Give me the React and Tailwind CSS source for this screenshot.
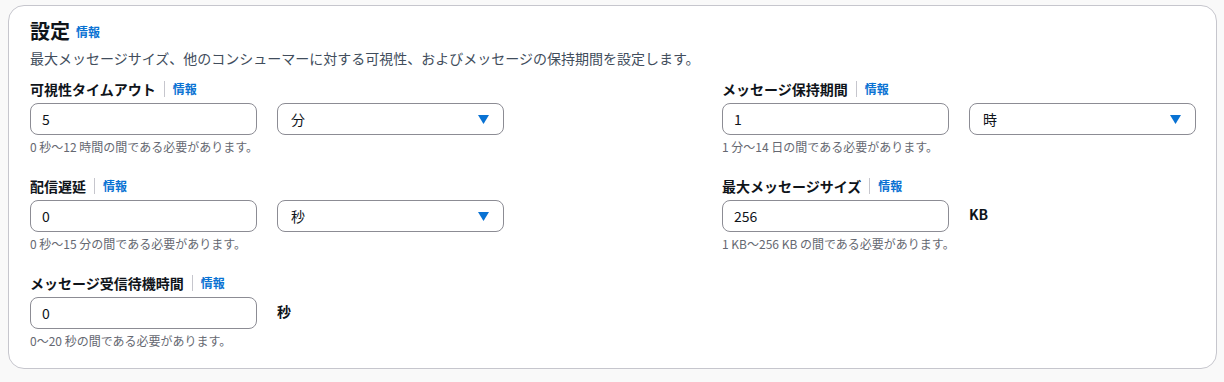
import React from "react";

const font = { fontFamily: '"Noto Sans CJK JP", "Noto Sans", sans-serif' };

function Info() {
  return <span className="text-[12px] leading-[16px] font-bold text-[#0972d3]">情報</span>;
}

function Label({ children }) {
  return (
    <div className="flex items-center h-[20px]">
      <span className="text-[14px] leading-[20px] font-bold text-[#0f141a]">{children}</span>
      <span className="mx-[8px] w-px h-[16px] bg-[#c6c6cd]" />
      <Info />
    </div>
  );
}

function TextInput({ value }) {
  return (
    <div className="h-[32px] rounded-[8px] border border-[#8c8c94] bg-white flex items-center pl-[11px] text-[14px] text-[#0f141a]">
      {value}
    </div>
  );
}

function Select({ value }) {
  return (
    <div className="h-[32px] rounded-[8px] border border-[#8c8c94] bg-white flex items-center justify-between pl-[13px] pr-[14px] text-[14px] text-[#0f141a]">
      <span>{value}</span>
      <svg width="11" height="9" viewBox="0 0 11 9">
        <path d="M0 0 H11 L5.5 9 Z" fill="#0972d3" />
      </svg>
    </div>
  );
}

function Unit({ children }) {
  return (
    <div className="pt-[4px] text-[14px] leading-[20px] font-bold text-[#0f141a]">{children}</div>
  );
}

function Hint({ children }) {
  return <div className="mt-[4px] text-[12px] leading-[16px] text-[#656871]">{children}</div>;
}

function Field({ label, value, select, unit, hint }) {
  return (
    <div className="flex flex-col">
      <Label>{label}</Label>
      <div className="grid grid-cols-2 gap-5 mt-[4px]">
        <TextInput value={value} />
        {select ? <Select value={select} /> : <Unit>{unit}</Unit>}
      </div>
      <Hint>{hint}</Hint>
    </div>
  );
}

export default function App() {
  return (
    <div className="w-[1224px] h-[382px] bg-[#f9f9f9] pt-[5px] px-[8px]" style={font}>
      <div className="w-[1209px] h-[364px] rounded-[16px] border border-[#c6c6cd] bg-white pt-[11px] pl-[21px] pr-[20px]">
        <div className="flex items-center gap-[6px] h-[28px]">
          <span className="text-[20px] leading-[28px] font-bold text-[#0f141a]">設定</span>
          <span className="text-[12px] leading-[16px] font-bold text-[#0972d3] mt-[2px]">情報</span>
        </div>
        <div className="text-[14px] leading-[20px] text-[#414d5c] mt-[3px]">
          最大メッセージサイズ、他のコンシューマーに対する可視性、およびメッセージの保持期間を設定します。
        </div>
        <div className="grid grid-cols-2 gap-x-[218px] mt-[11px]">
          <div className="flex flex-col gap-[21px]">
            <Field label="可視性タイムアウト" value="5" select="分" hint="0 秒〜12 時間の間である必要があります。" />
            <Field label="配信遅延" value="0" select="秒" hint="0 秒〜15 分の間である必要があります。" />
            <Field label="メッセージ受信待機時間" value="0" unit="秒" hint="0〜20 秒の間である必要があります。" />
          </div>
          <div className="flex flex-col gap-[21px]">
            <Field label="メッセージ保持期間" value="1" select="時" hint="1 分〜14 日の間である必要があります。" />
            <Field label="最大メッセージサイズ" value="256" unit="KB" hint="1 KB〜256 KB の間である必要があります。" />
          </div>
        </div>
      </div>
    </div>
  );
}
